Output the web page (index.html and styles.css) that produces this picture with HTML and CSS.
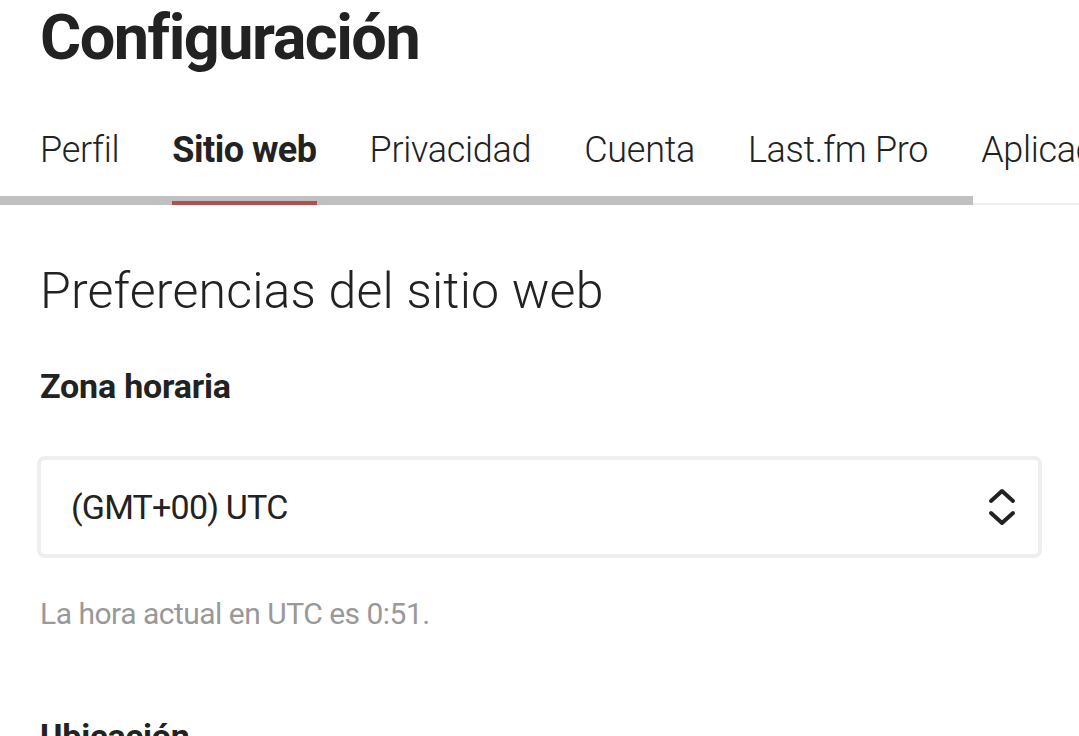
FILE: index.html
```html
<!DOCTYPE html>
<html lang="es">
<head>
    <meta charset="UTF-8">
    <meta name="viewport" content="width=device-width, initial-scale=1.0">
    <title>Configuración | Last.fm</title>
    <link rel="stylesheet" href="styles.css">
</head>
<body>
    <header class="page-header">
        <h1>Configuración</h1>
    </header>

    <nav class="tabs">
        <div class="tab-list">
            <a class="tab" href="#">Perfil</a>
            <a class="tab active" href="#">Sitio web</a>
            <a class="tab" href="#">Privacidad</a>
            <a class="tab" href="#">Cuenta</a>
            <a class="tab" href="#">Last.fm Pro</a>
            <a class="tab" href="#">Aplicaciones</a>
        </div>
        <div class="tab-scroll"><div class="tab-thumb"></div></div>
    </nav>

    <section class="settings">
        <h2>Preferencias del sitio web</h2>

        <label class="field-label" for="timezone">Zona horaria</label>
        <div class="select" id="timezone">
            <span>(GMT+00) UTC</span>
            <svg class="select-arrows" width="28" height="38" viewBox="0 0 28 38">
                <polyline points="3,13 14,3 25,13" fill="none" stroke="#222" stroke-width="4" stroke-linecap="round" stroke-linejoin="round"/>
                <polyline points="3,25 14,35 25,25" fill="none" stroke="#222" stroke-width="4" stroke-linecap="round" stroke-linejoin="round"/>
            </svg>
        </div>
        <p class="help">La hora actual en UTC es 0:51.</p>

        <h3 class="field-label">Ubicación</h3>
    </section>
</body>
</html>
```
FILE: styles.css
```css
body {
    font-family: Roboto, "Liberation Sans", sans-serif;
    margin: 0;
    color: #222;
    background-color: #fff;
    overflow: hidden;
}
.page-header {
    padding: 1px 40px 0;
}
h1 {
    margin: 0;
    font-size: 63px;
    line-height: 74px;
    font-weight: 700;
    letter-spacing: -1.5px;
}
.tabs {
    position: relative;
    margin-top: 47px;
}
.tab-list {
    display: flex;
    gap: 53px;
    padding: 0 40px;
    white-space: nowrap;
    border-bottom: 2px solid #eee;
}
.tab {
    display: block;
    padding: 6px 0 29px;
    font-size: 36px;
    line-height: 44px;
    font-weight: 300;
    letter-spacing: -0.3px;
    color: #222;
    text-decoration: none;
    border-bottom: 4px solid transparent;
    margin-bottom: -2px;
}
.tab.active {
    font-weight: 700;
    letter-spacing: -0.5px;
    border-bottom-color: #b04f4f;
    position: relative;
    z-index: 2;
}
.tab-scroll {
    position: absolute;
    left: 0;
    right: 0;
    bottom: 0;
    height: 9px;
}
.tab-thumb {
    width: 973px;
    height: 100%;
    background-color: #c0c0c0;
}
.settings {
    padding: 0 37px 0 40px;
}
h2 {
    margin: 56px 0 0;
    font-size: 50px;
    line-height: 60px;
    font-weight: 300;
    letter-spacing: 0.2px;
}
.field-label {
    display: block;
    margin: 45px 0 0;
    font-size: 34px;
    line-height: 40px;
    font-weight: 700;
    letter-spacing: -0.2px;
}
.select {
    display: flex;
    align-items: center;
    justify-content: space-between;
    height: 94px;
    margin: 50px 0 0 -3px;
    padding: 0 22px 0 30px;
    border: 4px solid #eee;
    border-radius: 8px;
    font-size: 34px;
    font-weight: 400;
    letter-spacing: -0.8px;
}
.help {
    margin: 36px 0 0;
    font-size: 30px;
    line-height: 40px;
    letter-spacing: -0.5px;
    color: #999;
}
h3.field-label {
    margin-top: 82px;
}
```
